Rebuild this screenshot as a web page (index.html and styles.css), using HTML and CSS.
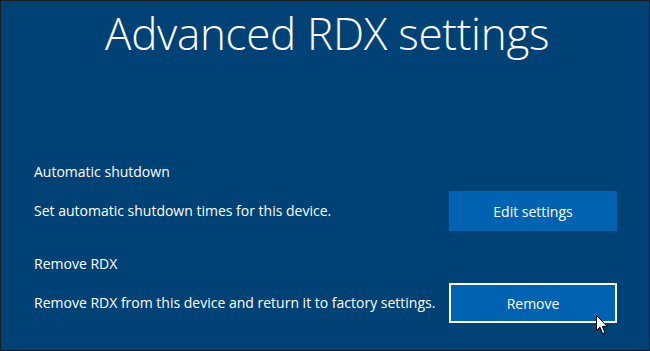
FILE: index.html
```html
<!DOCTYPE html>
<html lang="en">
<head>
  <meta charset="UTF-8" />
  <title>Advanced RDX settings</title>
  <link rel="stylesheet" href="styles.css">
</head>
<body>
  <div class="screen">
    <h1 class="title">Advanced RDX settings</h1>

    <div class="section">
      <div class="label">Automatic shutdown</div>
      <div class="row">
        <p>Set automatic shutdown times for this device.</p>
        <button class="btn">Edit settings</button>
      </div>
    </div>

    <div class="section">
      <div class="label">Remove RDX</div>
      <div class="row">
        <p>Remove RDX from this device and return it to factory settings.</p>
        <button class="btn focused">Remove
          <!-- mouse pointer -->
          <svg class="cursor" width="13" height="20" viewBox="0 0 13 20">
            <path d="M0.5 0.5 L0.5 15.5 L4 12.2 L6.6 18.6 L8.9 17.6 L6.4 11.4 L11.2 11.4 Z" fill="#fff" stroke="#000" stroke-width="1"/>
          </svg>
        </button>
      </div>
    </div>
  </div>
</body>
</html>
```

FILE: styles.css
```css
body { margin: 0; font-family: "Open Sans", "Noto Sans", sans-serif; }

.screen {
  width: 650px;
  height: 351px;
  box-sizing: border-box;
  border: 1px solid #1c1c1c;
  background: #004275;
  color: #fff;
  padding: 0 32px 0 33px;
  display: flex;
  flex-direction: column;
}

.title {
  margin: 0 0 0 71px;
  padding-top: 2px;
  font-size: 44px;
  font-weight: 300;
  line-height: 60px;
  letter-spacing: -0.3px;
}

.section { display: flex; flex-direction: column; }
.section:first-of-type { margin-top: 99px; }
.section + .section { margin-top: 23px; }

.label { font-size: 14px; line-height: 20px; }

.row {
  display: grid;
  grid-template-columns: 1fr 168px;
  align-items: center;
  margin-top: 9px;
}
.row p { margin: 0; font-size: 14px; line-height: 20px; }

.btn {
  position: relative;
  height: 40px;
  background: #0063b1;
  color: #fff;
  border: none;
  font-family: inherit;
  font-size: 14px;
  padding: 0;
}
.btn.focused { border: 2px solid #fff; height: 40px; }

.cursor { position: absolute; left: 145px; top: 30px; }
```
